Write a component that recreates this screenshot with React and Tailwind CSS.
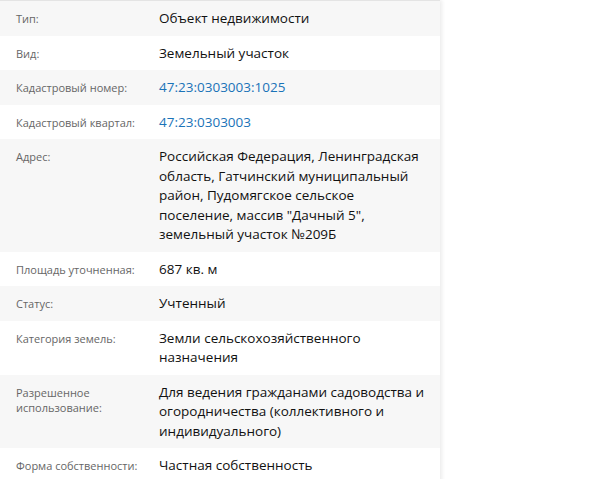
const rows = [
  ["Тип:", "Объект недвижимости"],
  ["Вид:", "Земельный участок"],
  ["Кадастровый номер:", "47:23:0303003:1025", true],
  ["Кадастровый квартал:", "47:23:0303003", true],
  ["Адрес:", "Российская Федерация, Ленинградская область, Гатчинский муниципальный район, Пудомягское сельское поселение, массив \"Дачный 5\", земельный участок №209Б"],
  ["Площадь уточненная:", "687 кв. м"],
  ["Статус:", "Учтенный"],
  ["Категория земель:", "Земли сельскохозяйственного назначения"],
  ["Разрешенное использование:", "Для ведения гражданами садоводства и огородничества (коллективного и индивидуального)"],
  ["Форма собственности:", "Частная собственность"],
];

export default function App() {
  return (
    <div className="w-[600px] h-[479px] bg-white overflow-hidden" style={{ fontFamily: '"Open Sans", "Noto Sans", sans-serif' }}>
      <div className="w-[440px] border-t border-[#e4e4e4] shadow-[2px_0_4px_rgba(0,0,0,0.08)]">
        {rows.map(([l, v, link], i) => (
          <div key={i} className={`flex pt-[8px] pb-[7px] ${i % 2 === 0 ? "bg-[#f7f7f7]" : "bg-white"}`}>
            <div className="w-[159px] shrink-0 pl-4 pr-2 pt-[2px] text-[11px] leading-[15px] text-[#666]">{l}</div>
            <div className={`w-[270px] text-[13.5px] leading-[19.5px] ${link ? "text-[#1a73b8]" : "text-[#111]"}`}>{v}</div>
          </div>
        ))}
      </div>
    </div>
  );
}
